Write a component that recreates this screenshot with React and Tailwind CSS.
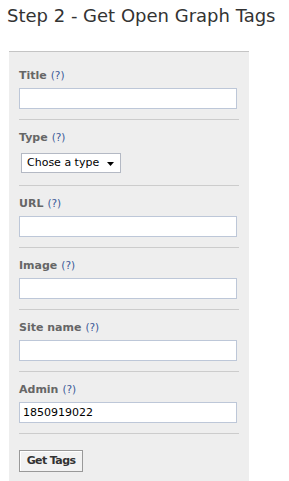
import React from 'react';

const font = "font-['DejaVu_Sans',Verdana,sans-serif]";

function Label({ text }) {
  return (
    <div className={`h-[13px] leading-[13px] whitespace-nowrap ${font}`}>
      <span className="text-[11px] font-bold text-[#666666]">{text}</span>
      <a href="#" className="ml-[4px] text-[10.5px] text-[#3b5998] no-underline">(?)</a>
    </div>
  );
}

function Field({ label, value = "", first }) {
  return (
    <div className={`${first ? "pt-[15px]" : "pt-[9px]"} pb-[10px] border-b border-[#cccccc]`}>
      <Label text={label} />
      <input
        type="text"
        defaultValue={value}
        className={`mt-[8px] block w-[218px] h-[21px] border border-[#bdc7d8] bg-white px-[3px] text-[11px] leading-[19px] text-black outline-none ${font}`}
      />
    </div>
  );
}

function App() {
  return (
    <div className={`min-h-screen bg-white ${font}`}>
      <h1 className="pt-[5px] pl-[7px] text-[18px] leading-[22px] font-normal text-[#333333] whitespace-nowrap">
        Step 2 - Get Open Graph Tags
      </h1>

      <div className="mt-[24px] ml-[9px] w-[240px] border-t border-[#c4c4c4] bg-[#eeeeee] px-[10px]">
        <Field label="Title" first />

        {/* Type select */}
        <div className="pt-[9px] pb-[12px] border-b border-[#cccccc]">
          <Label text="Type" />
          <div className="relative mt-[11px] ml-[2px] w-[100px] h-[20px]">
            <select
              defaultValue=""
              className={`block w-full h-full appearance-none border border-[#b4b9c4] bg-white pl-[5px] text-[11px] text-black outline-none ${font}`}
            >
              <option value="">Chose a type</option>
              <option value="article">article</option>
              <option value="website">website</option>
            </select>
            <svg className="pointer-events-none absolute right-[7px] top-[9px]" width="7" height="4" viewBox="0 0 7 4">
              <path d="M0 0h7L3.5 4z" fill="#000" />
            </svg>
          </div>
        </div>

        <Field label="URL" />
        <Field label="Image" />
        <Field label="Site name" />
        <Field label="Admin" value="1850919022" />

        <div className="pt-[13px] pb-[10px]">
          <button
            type="button"
            className={`w-[64px] h-[22px] border border-[#999999] bg-[#f2f2f2] text-[11px] font-bold tracking-[-0.6px] text-[#333333] shadow-[inset_1px_1px_0_#ffffff] ${font}`}
          >
            Get Tags
          </button>
        </div>
      </div>
    </div>
  );
}

export default App;
